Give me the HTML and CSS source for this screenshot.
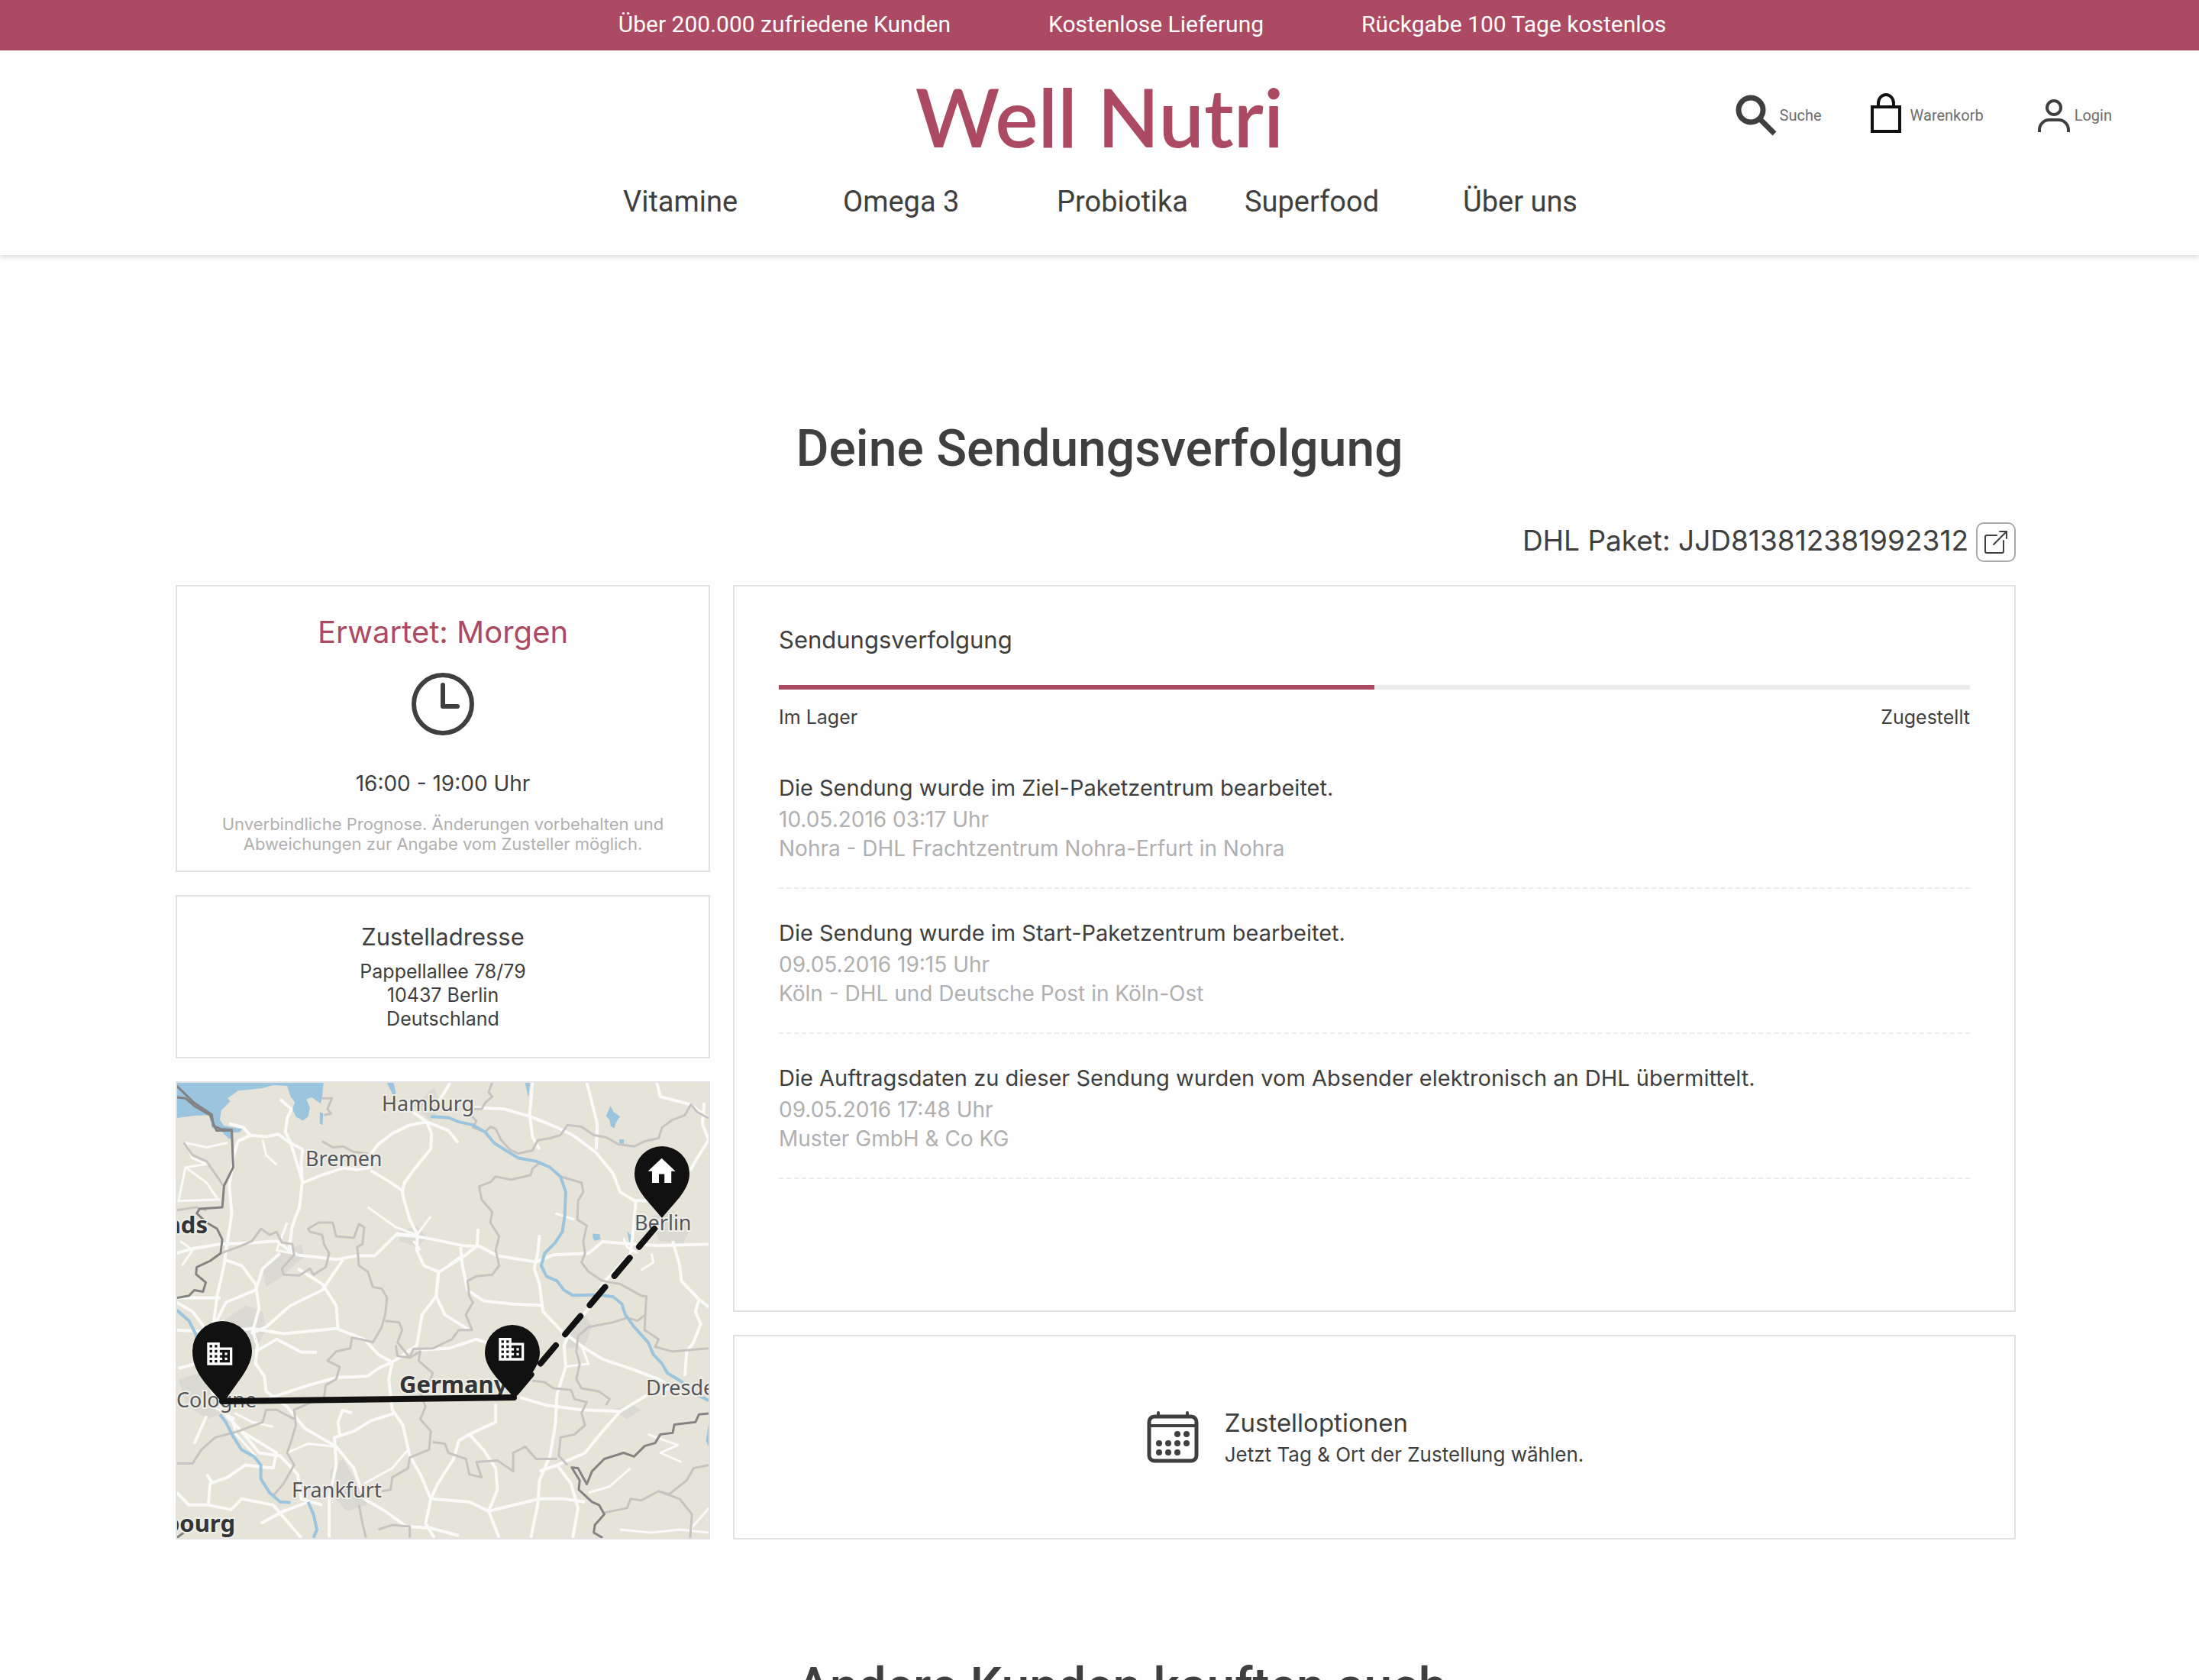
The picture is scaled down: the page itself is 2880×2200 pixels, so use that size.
FILE: index.html
```html
<!DOCTYPE html>
<html lang="de">
  <head>
    <meta charset="utf-8">
    <meta name="viewport" content="width=device-width, initial-scale=1">
    <title>Well Nutri - Sendungsverfolgung</title>
    <link rel="stylesheet" href="styles.css">
  </head>
  <body>
    <div class="topbar">
      <span>Über 200.000 zufriedene Kunden</span>
      <span>Kostenlose Lieferung</span>
      <span>Rückgabe 100 Tage kostenlos</span>
    </div>

    <header class="header">
      <div class="header-row">
        <a class="logo" href="#">Well Nutri</a>
        <div class="actions">
          <button class="action" type="button">
            <svg width="54" height="54" viewBox="0 0 54 54" fill="none" stroke="#3f3f3f">
              <circle cx="20" cy="20" r="16" stroke-width="7" />
              <path d="M31 31L51 51" stroke-width="7" />
            </svg>
            Suche
          </button>
          <a class="action" href="#">
            <svg width="50" height="58" viewBox="0 0 50 58" fill="none" stroke="#111" stroke-width="4">
              <path d="M4 18h36v32H4zM12 18v-5a10 11 0 0 1 20 0v5" />
            </svg>
            Warenkorb
          </a>
          <a class="action" href="#">
            <svg width="53" height="46" viewBox="-9 0 53 46" fill="none" stroke="#3f3f3f" stroke-width="4">
              <circle cx="21" cy="13" r="9" />
              <path d="M2 45v-3a13 13 0 0 1 13-13h12a13 13 0 0 1 13 13v3" />
            </svg>
            Login
          </a>
        </div>
      </div>
      <nav class="nav">
        <a href="#">Vitamine</a>
        <a href="#">Omega 3</a>
        <a href="#">Probiotika</a>
        <a href="#">Superfood</a>
        <a href="#">Über uns</a>
      </nav>
    </header>

    <main class="main">
      <h1>Deine Sendungsverfolgung</h1>

      <div class="parcel">
        <span>DHL Paket: JJD813812381992312</span>
        <button class="open-button" type="button" aria-label="Sendung öffnen">
          <svg width="32" height="32" viewBox="0 0 32 32" fill="none" stroke="#3f3f3f" stroke-width="2" stroke-linecap="round" stroke-linejoin="round">
            <path d="M17 7H4a2 2 0 0 0-2 2v19a2 2 0 0 0 2 2h20a2 2 0 0 0 2-2V14M13 19L30 2M21 2h9v9" />
          </svg>
        </button>
      </div>

      <div class="columns">
        <div class="column">
          <section class="card expected">
            <h2>Erwartet: Morgen</h2>
            <svg width="82" height="82" viewBox="0 0 82 82" fill="none" stroke="#3f3f3f" stroke-width="6" stroke-linecap="round" stroke-linejoin="round">
              <circle cx="41" cy="41" r="38" />
              <path d="M41 16v28h19" />
            </svg>
            <p class="time">16:00 - 19:00 Uhr</p>
            <p class="note">Unverbindliche Prognose. Änderungen vorbehalten und<br>Abweichungen zur Angabe vom Zusteller möglich.</p>
          </section>

          <section class="card address">
            <h2>Zustelladresse</h2>
            <address>Pappellallee 78/79<br>10437 Berlin<br>Deutschland</address>
          </section>

          <section class="card map">
            <svg viewBox="2 2 696 596" preserveAspectRatio="xMidYMid slice">
              <!-- land, water, roads and borders -->
              <g class="geo" transform="translate(-10 -16) scale(.459 .402)">
                <g class="urban">
                  <path d="M160 820l60-50 50 20 10 60-30 60-60 20-50-40z" />
                  <path d="M30 1010l60-20 40 70 30 60-50 20-60-50z" />
                  <path d="M660 530l50-20 30 40-30 30-50-20z" />
                  <path d="M1380 480l60-20 50 60-20 50-70-10z" />
                  <path d="M1130 860l60-60 20 40-20 60-50 10z" />
                  <path d="M460 1310l40-40 30 60 40 90-60 20-40-50z" />
                  <path d="M270 650l50-50 60-30 10 40-70 70-40 30z" />
                  <path d="M700 120l60-60 20 60-30 50z" />
                  <path d="M1270 1110l50-20 30 20-40 30z" />
                </g>
                <g class="water">
                  <path d="M20 40H444L440 90 436 112 410 92 395 98 405 125 400 155 385 168 365 155 355 130 362 108 350 90 340 55 300 52 270 62 200 70 170 95 178 105 152 135 148 165 160 185 212 195 205 205 180 208 185 222 175 228 155 205 125 190 118 150 75 152 20 160z" />
                  <path d="M433 140l10 5-2 38-8-6zM623 40h20l7 38-5 14zM1018 40h16l-6 52zM1262 120l10 20 18 15-12 20-5 18-10-8-3-20-10-12zM1288 228l14 2-2 14-12-2zM1212 536l20 2 2 16-16 6-6-10zM1310 528l16 20v20l-8 8zM1543 1150v80l-8-20z" />
                </g>
                <g class="roads">
                  <path d="M738 172L690 182 640 210 600 245 580 275 590 300 578 320 540 328 500 322 440 345 385 370 350 240 335 205 340 160 352 130 320 98" />
                  <path d="M385 262L345 238 315 212 280 220 235 216 200 235 188 280 175 380 182 470 170 560 160 640 140 740 130 830" />
                  <path d="M235 216L215 190 175 178" />
                  <path d="M385 262L380 300 383 370 375 450 355 510 345 590 310 560 250 565 150 570 70 585 25 600" />
                  <path d="M578 330L630 365 668 395 672 420 690 490 712 540 710 590 730 640 772 660 765 740 725 800 710 900 640 955 600 930 560 880 480 845 330 862 240 845 160 855" />
                  <path d="M738 172L752 210 750 260 700 330 675 370 668 400" />
                  <path d="M738 172L800 200 828 240M738 172L700 140 665 105M765 120L805 45M865 125L960 130 1035 155 1110 190 1155 215 1220 270 1270 340 1290 400 1330 428 1370 430" />
                  <path d="M1040 44L1032 150 1040 220 1060 262M1195 44L1210 110 1225 180 1222 262M1395 44L1405 90 1490 115 1543 160M1530 110L1525 180 1543 230 1510 290 1490 330" />
                  <path d="M345 590L370 606 420 612 480 620 540 608 590 608 650 540 710 545 780 560 840 575 890 578 940 608 1050 628 1100 605 1200 600 1240 562 1330 570 1400 575 1543 570" />
                  <path d="M1335 428L1328 520 1320 600 1240 700 1200 780 1150 850 1130 900 1135 970 1110 1060 1105 1160 1090 1260 1060 1340 1055 1420 1035 1527" />
                  <path d="M1440 560L1460 640 1465 690 1515 750 1543 775M1515 750L1505 790 1520 830 1500 890 1480 920 1475 1000" />
                  <path d="M1060 540L1055 600 1045 650 1060 700 1070 790 1120 850 1190 910 1240 945 1330 980 1400 1010 1440 1040" />
                  <path d="M835 580L840 640 855 720 900 755 980 765 1070 770M885 520L882 575 850 605 775 660" />
                  <path d="M772 660L765 740 790 800 860 850M720 915L800 910 880 880 920 895" />
                  <path d="M640 955L600 975 570 1000 480 1005 400 1030 320 1060 245 1090M640 955L630 1010 640 1110 670 1160 690 1260 720 1320 750 1400 735 1480 760 1527" />
                  <path d="M1005 1070L1080 1095 1180 1110 1290 1115 1370 1060 1460 1030M1290 1115L1240 1180 1190 1250 1110 1290 1060 1310" />
                  <path d="M240 845L255 900 250 960 275 1000 280 1050 340 1100 390 1170 480 1230 530 1300 560 1400 620 1440 680 1490 750 1495 830 1520" />
                  <path d="M650 1120L580 1145 530 1180 475 1200 480 1290 460 1400 460 1527M490 1190L485 1150 498 1112 525 1120" />
                  <path d="M935 1090L935 1150 860 1190 830 1210 815 1270 770 1350 750 1400 860 1410 915 1440 1060 1400 1130 1400 1190 1410" />
                  <path d="M860 1190L900 1240 935 1300 940 1370 915 1440 945 1527M1110 1290L1150 1350 1170 1430 1155 1527" />
                  <path d="M25 760L70 790 110 850 120 950 125 1050 160 1120 210 1180 260 1250 320 1260 370 1320 380 1400 440 1420" />
                  <path d="M160 620L210 640 250 700 260 780 240 860 280 840 350 770 440 720 500 620M320 600L270 650 250 720 165 760 130 840M370 650L440 700 480 770 485 850" />
                  <path d="M25 745L150 745M25 850L90 855 160 820M250 920L310 880 380 922 425 922M125 990L80 960 30 975" />
                  <path d="M210 1180L310 1250 300 1300 220 1290 170 1330 120 1350 115 1420 180 1435 210 1400 300 1420 360 1500 380 1527M25 1380L60 1420 115 1420M265 1480L330 1440 400 1410M110 1320L125 1345M110 1130L75 1220" />
                </g>
                <g class="roads minor">
                  <path d="M50 240L110 255 170 240M50 240L70 290 110 310 50 320 30 430 150 425M50 320L110 370 140 420M35 560L70 590 40 640M570 450L650 515 710 540 750 480M270 230L280 280 310 312" />
                  <path d="M480 1230L400 1220 340 1250M560 1350L640 1300 685 1240M1370 1190L1455 1225 1405 1250 1465 1280M1320 1300L1260 1360 1200 1380M1543 1430L1490 1500M1290 1500L1380 1510 1460 1500 1543 1510M1380 600L1385 630 1350 655M1105 470L1160 490" />
                  <path d="M190 1120L240 1150 300 1165M180 1130L195 1190 250 1260M130 1100L190 1140M340 500L310 590 355 600 345 560M700 540L650 535M700 560L720 590M800 640L835 610M1300 550L1310 580 1340 600M1180 900L1200 960 1130 970" />
                </g>
                <g class="states">
                  <path d="M925 44L915 75 925 90 905 110 895 130 860 130M440 95L468 95 455 130 465 145 445 150M440 235L470 255 500 252 530 270 570 275" />
                  <path d="M865 150L880 170 870 190 905 205 920 188 935 195 950 230 975 262 1000 275 1040 265 1055 232 1090 225 1120 215 1140 182 1180 188 1215 215 1250 222 1285 245 1330 252 1360 235 1400 225 1410 190 1440 165 1475 150 1492 115 1510 140 1543 160" />
                  <path d="M1060 305L1040 325 1035 345 980 360 935 350 920 368 888 382 895 425 925 465 920 500 945 545 935 590 945 640 925 670 880 675 855 690 860 740 870 760 850 800 868 850 830 850 810 880 755 910 700 912 690 940 655 935 650 900" />
                  <path d="M1120 350L1180 370 1185 400 1170 430 1168 490 1195 510 1185 560 1190 600 1180 630 1200 660 1240 690 1290 700 1350 738 1365 740 1362 800 1340 820 1310 810 1270 825 1200 840 1170 870 1165 920 1175 960 1165 1010 1180 1040 1230 1050 1260 1075 1250 1095" />
                  <path d="M1362 800L1360 850 1400 880 1390 905 1440 920 1490 915 1543 910M1040 1015L1075 1020 1100 1040 1150 1045 1160 1075 1195 1085 1180 1120 1190 1160 1160 1190 1120 1200 1115 1260 1140 1290" />
                  <path d="M150 600L200 580 240 560 265 520 290 540 310 530 325 565 355 570 360 605 325 650 330 670 375 672 405 650 415 670 450 645 460 600 445 570 440 540 405 530 400 520 430 500 470 500 480 545 530 550 545 505 560 515 555 570 540 580 545 640 570 660 585 710 610 715 625 745 620 800 610 840 585 890 550 880 525 875 520 910 480 920 455 950 490 970 480 1010 450 1030 445 1070 400 1090 360 1110 365 1160 355 1200 340 1250 360 1290 330 1350 300 1390" />
                  <path d="M620 820L660 825 668 850 655 890 690 940 720 920 715 950 755 990 745 1030 715 1040 735 1100 720 1140 750 1180 745 1240 690 1265 685 1300 640 1330 635 1370 610 1375M25 1285L70 1285 95 1240 135 1200 200 1180 270 1150 280 1110 310 1110 360 1140" />
                  <path d="M755 1215L790 1220 800 1250 850 1270 860 1320 895 1330 880 1280 940 1275 985 1310 985 1250 1020 1230 1050 1270 1110 1270M600 1500L640 1485 690 1490 690 1527M545 1420L555 1480 565 1527M1245 1445L1310 1430 1320 1400 1350 1405 1400 1375 1430 1385 1480 1340 1500 1300 1543 1290M1400 1375L1460 1400 1495 1450 1490 1527" />
                  <path d="M45 240L70 280 110 300 140 350 158 380M25 460L80 450 110 460" />
                </g>
                <g class="country">
                  <path d="M25 55L75 110 125 148 130 185 150 195 182 198 186 320 160 380 155 450 90 455 82 470 110 500 140 520 155 555 150 600 120 625 82 645 80 668 108 695 100 725 75 720 60 738 25 745M25 92L50 95 75 120 120 150 138 200 182 200" />
                  <path d="M1543 1122L1515 1125 1505 1150 1445 1158 1440 1185 1405 1190 1390 1218 1360 1228 1330 1262 1300 1250 1245 1270 1210 1310 1195 1352 1170 1300 1152 1298 1175 1340 1172 1370 1210 1410 1230 1420 1245 1450 1218 1485 1215 1510 1240 1527M25 1527L45 1510" />
                </g>
                <g class="rivers">
                  <path d="M750 155L800 158 830 172 870 182 905 205 930 240 960 262 1000 290 1050 300 1090 320 1120 350 1135 400 1132 480 1125 530 1105 565 1075 600 1065 640 1080 675 1110 690 1130 720 1155 737 1230 735 1270 742 1295 765 1305 800 1330 840 1370 890 1385 930 1410 960 1425 990 1465 1018 1510 1060 1543 1080" />
                  <path d="M25 785L60 820 80 865 90 940M148 1125L165 1150 185 1195 210 1240 245 1262 265 1290 265 1335 290 1380 320 1410 350 1412M400 1410L415 1450 425 1500 415 1527" />
                </g>
              </g>

              <g class="labels">
                <text x="270" y="39">Hamburg</text>
                <text x="170" y="111">Bremen</text>
                <text x="601" y="195">Berlin</text>
                <text x="1" y="427">Cologne</text>
                <text x="616" y="411">Dresden</text>
                <text x="152" y="545">Frankfurt</text>
                <text class="big" x="42" y="199" text-anchor="end">Netherlands</text>
                <text class="big" x="293" y="408">Germany</text>
                <text class="big" x="78" y="590" text-anchor="end">Luxembourg</text>
              </g>

              <!-- route -->
              <path class="route" d="M61 419L443 414" />
              <path class="route open" d="M627 193L442 412" />
              <g class="pins">
                <path d="M637 179C622 160 601 143 601 121A36 36 0 0 1 673 121C673 143 652 160 637 179z" />
                <path d="M442 413C425 392 405 376 405 355A36 36 0 0 1 477 355C477 376 458 392 442 413z" />
                <path d="M62 422C42 398 22 382 22 353A39 39 0 0 1 100 353C100 374 82 392 62 422z" />
              </g>
              <g fill="#fff">
                <path transform="translate(615 95) scale(1.8 1.9)" d="M10 20v-6h4v6h5v-8h3L12 3 2 12h3v8z" />
                <path transform="translate(420 331) scale(1.65)" d="M12 7V3H2v18h20V7H12zM6 19H4v-2h2v2zm0-4H4v-2h2v2zm0-4H4V9h2v2zm0-4H4V5h2v2zm4 12H8v-2h2v2zm0-4H8v-2h2v2zm0-4H8V9h2v2zm0-4H8V5h2v2zm10 12h-8v-2h2v-2h-2v-2h2v-2h-2V9h8v10zm-2-8h-2v2h2v-2zm0 4h-2v2h2v-2z" />
                <path transform="translate(38 337) scale(1.65)" d="M12 7V3H2v18h20V7H12zM6 19H4v-2h2v2zm0-4H4v-2h2v2zm0-4H4V9h2v2zm0-4H4V5h2v2zm4 12H8v-2h2v2zm0-4H8v-2h2v2zm0-4H8V9h2v2zm0-4H8V5h2v2zm10 12h-8v-2h2v-2h-2v-2h2v-2h-2V9h8v10zm-2-8h-2v2h2v-2zm0 4h-2v2h2v-2z" />
              </g>
            </svg>
          </section>
        </div>

        <div class="column">
          <section class="card tracking">
            <h2><label for="fortschritt">Sendungsverfolgung</label></h2>
            <progress id="fortschritt" value="50" max="100"></progress>
            <div class="progress-labels">
              <span>Im Lager</span>
              <span>Zugestellt</span>
            </div>
            <ul class="events">
              <li>
                <h3>Die Sendung wurde im Ziel-Paketzentrum bearbeitet.</h3>
                <p>10.05.2016 03:17 Uhr</p>
                <p>Nohra - DHL Frachtzentrum Nohra-Erfurt in Nohra</p>
              </li>
              <li>
                <h3>Die Sendung wurde im Start-Paketzentrum bearbeitet.</h3>
                <p>09.05.2016 19:15 Uhr</p>
                <p>Köln - DHL und Deutsche Post in Köln-Ost</p>
              </li>
              <li>
                <h3>Die Auftragsdaten zu dieser Sendung wurden vom Absender elektronisch an DHL übermittelt.</h3>
                <p>09.05.2016 17:48 Uhr</p>
                <p>Muster GmbH &amp; Co KG</p>
              </li>
            </ul>
          </section>

          <a class="card options" href="#">
            <svg width="68" height="68" viewBox="0 0 68 68" fill="none" stroke="#3f3f3f" stroke-width="5">
              <rect x="3" y="7" width="62" height="58" rx="7" />
              <path d="M3 19h62" stroke-width="4" />
              <path d="M15 2v5M53 2v5" stroke-linecap="round" stroke-width="4" />
              <g fill="#3f3f3f" stroke="none">
                <circle cx="40" cy="30" r="4" />
                <circle cx="52" cy="30" r="4" />
                <circle cx="16" cy="42" r="4" />
                <circle cx="28" cy="42" r="4" />
                <circle cx="40" cy="42" r="4" />
                <circle cx="52" cy="42" r="4" />
                <circle cx="16" cy="54" r="4" />
                <circle cx="28" cy="54" r="4" />
                <circle cx="40" cy="54" r="4" />
              </g>
            </svg>
            <div>
              <h2>Zustelloptionen</h2>
              <p>Jetzt Tag &amp; Ort der Zustellung wählen.</p>
            </div>
          </a>
        </div>
      </div>

      <h1 class="more">Andere Kunden kauften auch</h1>
    </main>
  </body>
</html>
```

FILE: styles.css
```css
* {
  box-sizing: border-box;
  margin: 0;
  padding: 0;
}

body {
  background-color: #fefefe;
  color: #3f3f3f;
  font-family: Inter, sans-serif;
}

a {
  color: inherit;
  text-decoration: none;
}

h1,
h2,
h3 {
  font-weight: 400;
}

.topbar {
  display: flex;
  justify-content: center;
  gap: 128px;
  padding: 14px 0 16px 112px;
  background-color: #ab4a62;
  color: white;
  font-family: Roboto, sans-serif;
  font-size: 30px;
  line-height: 36px;
}

/* header */
.header {
  padding: 26px 114px 46px;
  box-shadow: 0 2px 6px rgba(0, 0, 0, 0.16);
  font-family: Roboto, sans-serif;
}

.header-row {
  display: grid;
  grid-template-columns: 1fr auto 1fr;
  align-items: center;
}

.logo {
  grid-column: 2;
  color: #ab4a62;
  font-family: Lato, sans-serif;
  font-size: 106px;
  font-weight: 600;
  line-height: 120px;
}

.actions {
  display: flex;
  justify-content: flex-end;
  align-items: center;
  gap: 62px;
  padding-bottom: 2px;
}

.action {
  display: flex;
  align-items: center;
  gap: 4px;
  border: none;
  background: none;
  color: #6f6f6f;
  font-family: Roboto, sans-serif;
  font-size: 20px;
  cursor: pointer;
}

.nav {
  display: grid;
  grid-template-columns: 288px 280px 246px 286px 148px;
  justify-content: center;
  margin-top: 28px;
  font-size: 38px;
  line-height: 48px;
  white-space: nowrap;
}

/* content */
.main {
  padding: 214px 240px 100px 230px;
}

h1 {
  padding-left: 10px;
  font-family: Roboto, sans-serif;
  font-size: 66px;
  font-weight: 500;
  line-height: 80px;
  text-align: center;
}

.more {
  margin-top: 153px;
  padding-left: 68px;
}

.parcel {
  display: flex;
  justify-content: flex-end;
  gap: 10px;
  margin-top: 56px;
  font-size: 37px;
  line-height: 48px;
}

.open-button {
  display: flex;
  align-items: center;
  justify-content: center;
  width: 52px;
  height: 52px;
  border: 2px solid #aaa;
  border-radius: 10px;
  background-color: white;
  cursor: pointer;
}

.columns {
  display: grid;
  grid-template-columns: 5fr 12fr;
  gap: 30px;
  margin-top: 30px;
}

.column {
  display: flex;
  flex-direction: column;
  gap: 30px;
  min-width: 0;
}

.card {
  border: 2px solid #e2e2e2;
}

.expected {
  display: flex;
  flex-direction: column;
  align-items: center;
  padding: 36px 20px 22px;
  text-align: center;
}

.expected h2 {
  margin-bottom: 29px;
  color: #ab4a62;
  font-size: 40px;
  line-height: 48px;
}

.time {
  margin-top: 46px;
  font-size: 28px;
  line-height: 34px;
}

.note {
  margin-top: 23px;
  color: #b0b0b0;
  font-size: 22px;
  line-height: 26px;
}

.address {
  padding: 35px 20px 34px;
  text-align: center;
}

.address h2 {
  font-size: 31px;
  line-height: 36px;
}

.address address {
  margin-top: 12px;
  font-size: 25px;
  font-style: normal;
  line-height: 31px;
}

/* map */
.map {
  height: 600px;
  background-color: #e6e4d8;
  overflow: hidden;
}

.map svg {
  display: block;
  width: 100%;
  height: 100%;
}

.geo path {
  vector-effect: non-scaling-stroke;
  stroke-linejoin: round;
}

.urban {
  fill: #dbdad2;
}

.water {
  fill: #9bc4df;
}

.roads,
.states,
.country,
.rivers {
  fill: none;
}

.roads {
  stroke: #fafaf8;
  stroke-width: 4px;
}

.roads.minor {
  stroke-width: 3px;
}

.states {
  stroke: #c6c3c1;
  stroke-width: 3px;
}

.country {
  stroke: #838383;
  stroke-width: 3px;
}

.rivers {
  stroke: #9bc4df;
  stroke-width: 4px;
}

.labels {
  fill: #56575a;
  stroke: #eeede6;
  stroke-width: 4px;
  paint-order: stroke;
  font-family: "Noto Sans", sans-serif;
  font-size: 27px;
}

.labels .big {
  fill: #333437;
  font-size: 31px;
  font-weight: 700;
}

.route {
  fill: none;
  stroke: #111;
  stroke-width: 8px;
  stroke-linecap: round;
}

.route.open {
  stroke-dasharray: 31 19;
}

.pins {
  fill: #111;
}

/* tracking */
.tracking {
  flex: 1;
  padding: 52px 58px;
}

.tracking h2 {
  font-size: 31px;
  line-height: 36px;
}

progress {
  display: block;
  width: 100%;
  height: 6px;
  margin-top: 41px;
  border: none;
  background-color: #ececec;
  appearance: none;
}

progress::-webkit-progress-bar {
  background-color: #ececec;
}

progress::-webkit-progress-value {
  background-color: #ab4a62;
}

.progress-labels {
  display: flex;
  justify-content: space-between;
  margin-top: 20px;
  font-size: 25px;
  line-height: 32px;
}

.events {
  margin-top: 59px;
  list-style: none;
}

.events li {
  margin-bottom: 40px;
  padding-bottom: 32px;
  border-bottom: 2px dashed #ececec;
}

.events h3 {
  margin-bottom: 4px;
  font-size: 29px;
  line-height: 36px;
}

.events p {
  color: #b0b0b0;
  font-size: 28px;
  line-height: 38px;
}

.options {
  display: flex;
  justify-content: center;
  align-items: center;
  gap: 34px;
  height: 268px;
  padding-right: 24px;
}

.options h2 {
  margin-bottom: 6px;
  font-size: 33px;
  line-height: 40px;
}

.options p {
  font-size: 26px;
  line-height: 32px;
}
```
